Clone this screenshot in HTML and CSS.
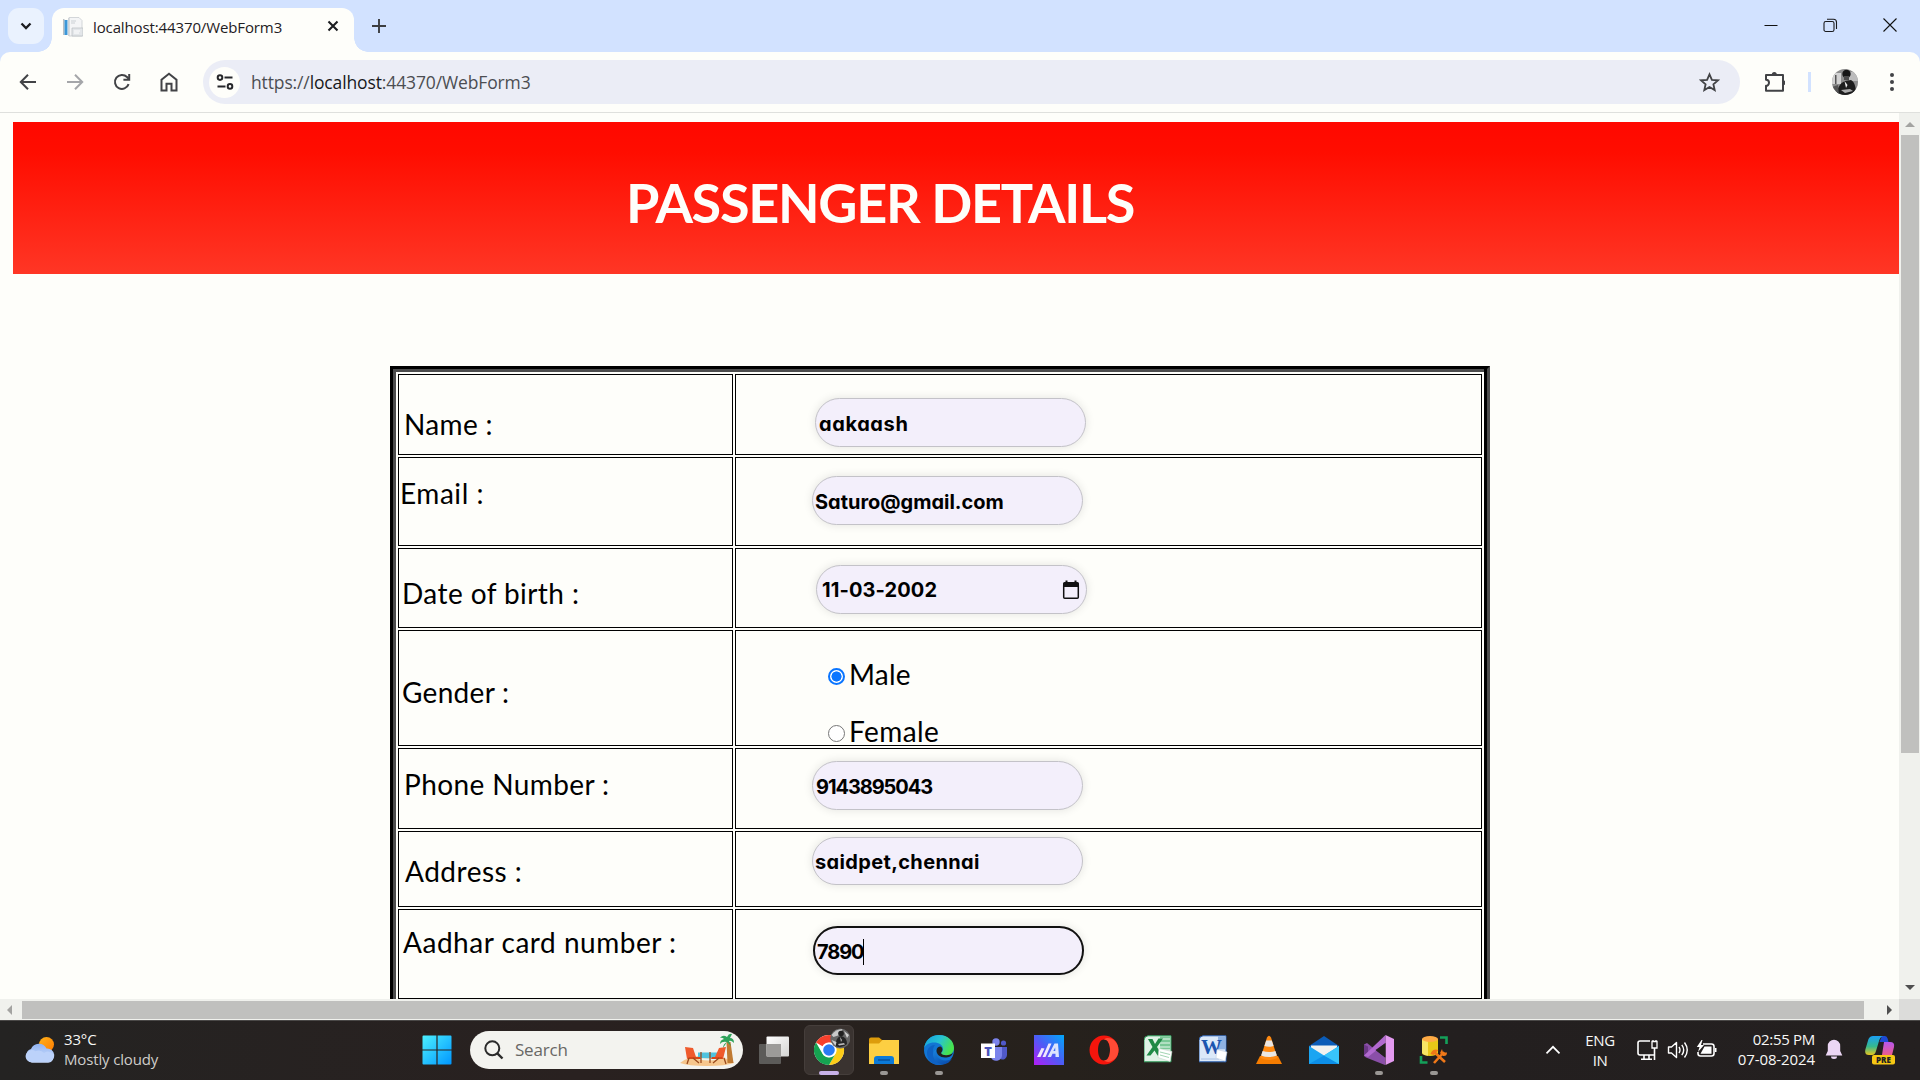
FILE: index.html
```html
<!DOCTYPE html>
<html lang="en">
<head>
<meta charset="utf-8">
<title>localhost:44370/WebForm3</title>
<link rel="stylesheet" href="styles.css">
</head>
<body>
<div class="screen">
  <header class="tabstrip">
    <div class="tab-search"><svg width="18" height="18" viewBox="0 0 18 18"><path d="M4.500 6.500 9 11l4.500-4.500" fill="none" stroke="#1c1d20" stroke-width="2.300"/></svg></div>
    <div class="tab">
      <svg class="favicon" width="20" height="20" viewBox="0 0 20 20"><path d="M6 .5h10l3 3V19H6z" fill="#f4f5f6" stroke="#c9cdd1" stroke-width=".8"/><path d="M0 2h1.500v16H0z" fill="#b9bfc4"/><path d="M1.500 3h3v15h-3z" fill="#3b97d8"/><path d="M5 1h1.500v18H5z" fill="#cfd4d8"/><path d="M8 4h5M8 6h4" stroke="#cbd0d4"/><path d="M9 11h11v8H9z" fill="#e3e6e9" stroke="#b8bdc2" stroke-width=".7"/><path d="M11 14h6M11 16h5" stroke="#fff"/></svg>
      <span class="tab-title">localhost:44370/WebForm3</span>
      <svg class="tab-close" width="12" height="12" viewBox="0 0 12 12"><path d="M1.500 1.500l9 9M10.500 1.500l-9 9" stroke="#1c1d20" stroke-width="2.100"/></svg>
    </div>
    <svg class="newtab" width="14" height="14" viewBox="0 0 14 14"><path d="M7 0v14M0 7h14" stroke="#3c3d40" stroke-width="1.900"/></svg>
    <div class="winctl">
      <svg width="14" height="14" viewBox="0 0 14 14"><path d="M.5 7.500h13" stroke="#111"/></svg>
      <svg width="15" height="15" viewBox="0 0 15 15" fill="none" stroke="#1a1b1e" stroke-width="1.100"><rect x="1" y="3.500" width="10" height="10" rx="1.800"/><path d="M4 1.200h6.500a3 3 0 0 1 3 3V11"/></svg>
      <svg width="14" height="14" viewBox="0 0 14 14"><path d="M.5.5l13 13M13.500.5l-13 13" stroke="#111" stroke-width="1.100"/></svg>
    </div>
  </header>

  <div class="toolbar">
    <div class="nav">
      <svg width="20" height="20" viewBox="0 0 20 20" fill="none" stroke="#424346" stroke-width="2"><path d="M18 10H3M10 2.800 2.800 10l7.200 7.200"/></svg>
      <svg width="20" height="20" viewBox="0 0 20 20" fill="none" stroke="#a5a6a9" stroke-width="2"><path d="M2 10h15M10 2.800l7.200 7.200-7.200 7.200"/></svg>
      <svg width="20" height="20" viewBox="0 0 20 20" fill="none" stroke="#424346" stroke-width="2"><path d="M16.600 12.200A7 7 0 1 1 15 5l2 2.200"/><path d="M17.200 2v5.800h-5.800"/></svg>
      <svg width="20" height="20" viewBox="0 0 20 20" fill="none" stroke="#424346" stroke-width="2"><path d="M2.500 18.500V7.800L10 1.800l7.500 6v10.700h-5v-6.700h-5v6.700z"/></svg>
    </div>
    <div class="omnibox">
      <div class="site-info"><svg width="18" height="18" viewBox="0 0 18 18" fill="none" stroke="#26272a" stroke-width="2"><circle cx="4" cy="4.600" r="2.300"/><path d="M8.500 4.600h8M1.500 13.400h8"/><circle cx="14" cy="13.400" r="2.300"/></svg></div>
      <span class="url">https://<b>localhost</b>:44370/WebForm3</span>
      <svg class="star" width="21" height="21" viewBox="0 0 21 21"><path d="M10.500 2.300l2.400 5.500 6 .5-4.500 4 1.300 5.800-5.200-3.100-5.200 3.100 1.300-5.800-4.500-4 6-.5z" fill="none" stroke="#424346" stroke-width="1.800"/></svg>
    </div>
    <svg class="ext" width="22" height="22" viewBox="0 0 22 22"><path d="M3 4h17v15.800H3v-5a3 3 0 0 0 0-6z" fill="none" stroke="#424346" stroke-width="2" stroke-linejoin="round"/><path d="M8.800 3.500a2.500 2.500 0 0 1 5 0zM20 9.300a2.500 2.500 0 0 1 0 5z" fill="#424346"/></svg>
    <span class="sep"></span>
    <svg class="avatar" width="26" height="26" viewBox="0 0 26 26"><defs><clipPath id="av"><circle cx="13" cy="13" r="13"/></clipPath></defs><g clip-path="url(#av)"><path d="M0 0h26v26H0z" fill="#8d8d8d"/><path d="M0 4h9v11H0z" fill="#d2d2d2"/><path d="M17 3h9v9h-9z" fill="#bcbcbc"/><path d="M3 6h1.500v9H3z" fill="#555"/><circle cx="14.500" cy="5" r="4.200" fill="#151515"/><path d="M12 7h5v4h-5z" fill="#4a4a4a"/><path d="M5 26c0-7 3-12 8-14l6-1c4 2 5 8 5 15z" fill="#1d1d1d"/><path d="M12.500 12l3 4-1.500 3z" fill="#eee"/><path d="M9 21l9-1 3 2-8 2z" fill="#aaa"/><path d="M0 18l6-2 1 10H0z" fill="#555"/></g></svg>
    <svg class="kebab" width="4" height="20" viewBox="0 0 4 20" fill="#424346"><circle cx="2" cy="3" r="2"/><circle cx="2" cy="10" r="2"/><circle cx="2" cy="17" r="2"/></svg>
  </div>

  <div class="view">
    <main class="page">
      <h1 class="banner">PASSENGER DETAILS</h1>
      <div class="form">
        <div class="cell label name"><span>Name :</span></div>
        <div class="cell name-in"><div class="field"><span class="t-name">aakaash</span></div></div>
        <div class="cell label email"><span>Email :</span></div>
        <div class="cell email-in"><div class="field"><span class="t-email">Saturo@gmail.com</span></div></div>
        <div class="cell label dob"><span>Date of birth :</span></div>
        <div class="cell dob-in"><div class="field date"><span class="t-date">11-03-2002</span><svg width="18" height="20" viewBox="0 0 18 20"><path d="M1.700 6h14.600v11.300a1 1 0 0 1-1 1H2.700a1 1 0 0 1-1-1z" fill="none" stroke="#111" stroke-width="1.500"/><path d="M1 3.500A1.500 1.500 0 0 1 2.500 2h13A1.500 1.500 0 0 1 17 3.500V7H1zM3.500.500h2V3h-2zM12.500.500h2V3h-2z" fill="#111"/></svg></div></div>
        <div class="cell label gender"><span>Gender :</span></div>
        <div class="cell gender-in">
          <div class="radio"><i class="dot on"></i><span>Male</span></div>
          <div class="radio"><i class="dot"></i><span class="t-female">Female</span></div>
        </div>
        <div class="cell label phone"><span>Phone Number :</span></div>
        <div class="cell phone-in"><div class="field"><span class="t-num">9143895043</span></div></div>
        <div class="cell label address"><span>Address :</span></div>
        <div class="cell address-in"><div class="field short"><span class="t-addr">saidpet,chennai</span></div></div>
        <div class="cell label aadhar"><span>Aadhar card number :</span></div>
        <div class="cell aadhar-in"><div class="field focus"><span class="t-card">7890</span><i class="caret"></i></div></div>
      </div>
    </main>
    <div class="vbar"><i class="arrow up"></i><span class="vthumb"></span><i class="arrow down"></i></div>
    <div class="hbar"><i class="arrow left"></i><span class="hthumb"></span><i class="arrow right"></i></div>
    <div class="corner"></div>
  </div>

  <footer class="taskbar">
    <div class="weather">
      <svg width="32" height="28" viewBox="0 0 32 28"><defs><linearGradient id="sun" x1="0" y1="0" x2="1" y2="1"><stop offset="0" stop-color="#ffb31a"/><stop offset="1" stop-color="#ff7a00"/></linearGradient><linearGradient id="cl" x1="0" y1="0" x2="0" y2="1"><stop offset="0" stop-color="#8fb2f2"/><stop offset="1" stop-color="#dbe8fd"/></linearGradient></defs><circle cx="22.500" cy="8.500" r="7.500" fill="url(#sun)"/><path d="M8 26.500a7 7 0 0 1-1-13.500 8.500 8.500 0 0 1 15.500-.500A7 7 0 0 1 24 26.500z" fill="url(#cl)"/><path d="M8 26.500a6.200 6.200 0 1 1 3.500-11.200 7 7 0 0 1 8.500 2 5.500 5.500 0 1 1 5 9.200z" fill="#bcd2fa"/></svg>
      <div class="wtext"><span>33°C</span><span class="dim">Mostly cloudy</span></div>
    </div>
    <svg class="start" width="30" height="30" viewBox="0 0 30 30"><defs><linearGradient id="win" x1="0" y1="0" x2="1" y2="1" gradientUnits="objectBoundingBox"><stop offset="0" stop-color="#4cf0ff"/><stop offset="1" stop-color="#0096ff"/></linearGradient></defs><path d="M1.500.5H14.400V14.400H.5V1.500a1 1 0 0 1 1-1zM15.600.5H28.500a1 1 0 0 1 1 1V14.400H15.600zM.5 15.600H14.400V29.500H1.500a1 1 0 0 1-1-1zM15.600 15.600H29.500V28.500a1 1 0 0 1-1 1H15.600z" fill="url(#win)"/></svg>
    <div class="search">
      <svg width="20" height="20" viewBox="0 0 20 20" fill="none" stroke="#2a2a2a" stroke-width="2"><circle cx="8.300" cy="8.300" r="7"/><path d="M13.300 13.300l5.200 5.200" stroke-width="2.400"/></svg>
      <span>Search</span>
      <svg class="beach" width="56" height="34" viewBox="0 0 56 34"><path d="M1 30q8-7 27-8 19 1 27 8-8 3-27 3T1 30z" fill="#f6c68c"/><path d="M19 19.500h20v4.500q-10 3-20 0z" fill="#4fc3de"/><path d="M18 24q10 3 23 0l-2 2.500q-9 2-19 0z" fill="#e9f7f5"/><path d="M47.500 9h4l3 21h-6z" fill="#c07a32"/><path d="M48 9q-5-1-7 2 0-4 4-5-2-2-4-1 3-4 7-1 2-4 5-3-1 2-2 4 4 0 4 5-3-3-5-2l2 5-4-4-4 6q0-4 4-6z" fill="#2fa35a"/><path d="M6 14l8 1 3 9-9 2zM47 14l-7 1-4 9 8 2z" fill="#ef5a2c"/><path d="M10 24h11l1 2H9zM43 24H33l-1 2h12z" fill="#d84718"/><path d="M22 19v11M10 25l-2 6M14 25l6 5M31 19v11M45 25l2 6M40 25l-6 5" fill="none" stroke="#9a4a1c" stroke-width="1.300"/></svg>
    </div>
    <div class="apps">
      <div class="app"><svg width="30" height="30" viewBox="0 0 30 30"><defs><linearGradient id="tv" x1="0" y1="0" x2="1" y2="1"><stop offset="0" stop-color="#fff"/><stop offset="1" stop-color="#d4d4d2"/></linearGradient></defs><rect x="0" y="9" width="22" height="20" rx="1" fill="#5c5b59"/><rect x="7.500" y="1.500" width="22.500" height="20" rx="1" fill="url(#tv)"/><path d="M7.500 9H22v12.500H7.500z" fill="#9c9b99"/></svg></div>
      <div class="app"><div class="active">
        <svg width="36" height="40" viewBox="0 0 36 40"><g transform="translate(15 23)"><circle r="15" fill="#fff"/><path d="M-13-7.500A15 15 0 0 1 13-7.500H0A7.500 7.500 0 0 0-6.500-3.800z" fill="#f6402c"/><path d="M13-7.500A15 15 0 0 1 0 15L6.500 3.800A7.500 7.500 0 0 0 0-7.500z" fill="#fccc18"/><path d="M0 15A15 15 0 0 1-13-7.500L-6.500 3.800A7.500 7.500 0 0 0 6.500 3.800z" fill="#15a351"/><circle r="7.200" fill="#fff"/><circle r="5.800" fill="#2a7bf4"/></g><circle cx="26.300" cy="11.500" r="10" fill="#666"/><path d="M17.500 8q4-6 11-6l-3 6-6 2z" fill="#c9c9c9"/><path d="M21 19q1-9 6-10 6 1 6 8-5 5-12 2z" fill="#262626"/><circle cx="27" cy="6.500" r="2.800" fill="#202020"/><path d="M17.500 13l5 2-1 4zM30 4l5 4-2 3z" fill="#cfcfcf"/><path d="M26 10l2 3-1 2zM24 17l6-1 1 1.500-6 1z" fill="#bbb"/></svg>
      </div><i class="run wide"></i></div>
      <div class="app"><svg width="30" height="30" viewBox="0 0 30 30"><path d="M0 4.500a2 2 0 0 1 2-2h8l3 2.500h15a2 2 0 0 1 2 2V10H0z" fill="#dd9c0b"/><path d="M0 8.500h10L13.500 5H30v24H0z" fill="#fdcf42"/><path d="M5 29v-5a3 3 0 0 1 3-3h14a3 3 0 0 1 3 3v5z" fill="#0b7ad8"/><path d="M9 25h12" stroke="#074b95" stroke-width="1.300"/></svg><i class="run"></i></div>
      <div class="app"><svg width="30" height="30" viewBox="0 0 30 30"><defs><linearGradient id="e1" x1="0" y1="0" x2="1" y2=".4"><stop offset="0" stop-color="#129fe0"/><stop offset=".55" stop-color="#28c3d2"/><stop offset="1" stop-color="#47e34e"/></linearGradient><linearGradient id="e2" x1="0" y1="0" x2=".6" y2="1"><stop offset="0" stop-color="#1a86e0"/><stop offset="1" stop-color="#0a4faf"/></linearGradient></defs><circle cx="15" cy="15" r="15" fill="#1276d4"/><path d="M0 14C1 5 7 0 15 0c9 0 15 6 15 13 0 5-4 7.500-8 7.500-3 0-5-1-5-2 0-1 2-1.500 2-4.500 0-4-4-6.500-9-6.500C5 7.500 1 10 0 14z" fill="url(#e1)"/><path d="M9 15c0 8 5 13 12 13.500a15 15 0 0 1-8 1.400C7 29 3 24 3 18c0-5 4-8 8-8-1 1-2 3-2 5z" fill="#0e62c4"/><path d="M12.500 14.500c-2 5 2 11 9 11 3 0 5-1 6.500-2-2 3.500-5 5.500-8.500 6-6-.5-10.500-5-10.500-10 0-2 1.500-4.500 3.500-5z" fill="url(#e2)"/><path d="M12.500 15.500c0-2.500 2-4 4-4 2.500 1.500 2.500 4 .5 6.500 1 2 4 2.500 7 2 2 0 4-1 5-2.500-1 4-4 5-8 5-5 0-8.500-3-8.500-7z" fill="#23211e"/></svg><i class="run"></i></div>
      <div class="app"><svg width="26" height="24" viewBox="0 0 26 24"><circle cx="15" cy="4" r="3.700" fill="#7b83eb"/><circle cx="22.500" cy="5" r="2.600" fill="#5059c9"/><path d="M18 9h8v8a4.500 4.500 0 0 1-6 4.200z" fill="#5059c9"/><path d="M10 9h11v8.500a5.800 5.800 0 0 1-11 2z" fill="#7b83eb"/><path d="M0 5.500h14V20H0z" fill="#fff"/><text x="7" y="17.500" text-anchor="middle" class="ti" font-size="13" fill="#4b53bc">T</text></svg></div>
      <div class="app"><svg width="30" height="30" viewBox="0 0 30 30"><defs><linearGradient id="ma" x1="0" y1="1" x2="1" y2="0"><stop offset="0" stop-color="#b41cf5"/><stop offset=".5" stop-color="#4d5cf6"/><stop offset="1" stop-color="#00a9fb"/></linearGradient></defs><path d="M0 0h30v30H0z" fill="url(#ma)"/><path d="M3 22L7.500 13l3 .5L6.500 22zM8.500 22L14.500 8.500h3L11.500 22z" fill="#f0e7fc"/><path d="M13.500 22L20.500 8.500h3.500l1 13.500h-3.500v-3.200h-3L17 22zM21.300 16l-.1-3.500-1.800 3.500z" fill="#dce5fd"/></svg></div>
      <div class="app"><svg width="30" height="30" viewBox="0 0 30 30"><path d="M15 .5A14.500 14.500 0 1 0 15 29.500 14.500 14.500 0 1 0 15 .5zM15 4.500c4 0 6 5 6 10.500s-2 10.500-6 10.500S9 20.500 9 15 11 4.500 15 4.500z" fill="#f5150c" fill-rule="evenodd"/><path d="M15 4.500c5-4 14.500 1 14.500 10.500S20 29.500 15 25.500c4 0 6-5 6-10.500S19 4.500 15 4.500z" fill="#ff4a35"/></svg></div>
      <div class="app"><svg width="30" height="30" viewBox="0 0 30 30"><path d="M4 .8h23v26H0V5.500q0-4.200 4-4.700z" fill="#dff2e6" stroke="#2f9e5c"/><path d="M16 1.300h10.500v13H16z" fill="#79c795"/><path d="M15 4h11M15 8h11M15 12h11" stroke="#e9f7ee"/><path d="M4 4h4.500l2.500 5 3.500-5.500H19L13 12l5.500 8.500h-5l-3-5-4 5H2.500l6-8.500z" fill="#1f8a46"/><path d="M15 13.500l13 3-2 10-12-4z" fill="#fff" stroke="#c9d3cc" stroke-width=".6"/><path d="M16 17l10 2.500M16 20l9 2.500" stroke="#8cc9a0" stroke-width=".8"/></svg></div>
      <div class="app"><svg width="30" height="30" viewBox="0 0 30 30"><path d="M4 .8h23v26H0V5.500q0-4.200 4-4.700z" fill="#dce9f9" stroke="#2c62b4"/><path d="M19 1.300h7.500v13H19z" fill="#8fb2e2"/><path d="M2 24h18" stroke="#a9c0e2"/><text x="12.500" y="19" text-anchor="middle" class="wi" font-size="21" fill="#1b55b0">W</text><path d="M18 14.500l10 2.500-2 9-9-3z" fill="#fff" stroke="#c5cfdf" stroke-width=".6"/></svg></div>
      <div class="app"><svg width="28" height="30" viewBox="0 0 28 30"><path d="M5 21h18l4 8H1z" fill="#f57c00"/><path d="M12 2.500q2-3.500 4 0L22.500 23q-8.500 4-17 0z" fill="#ff8a12"/><path d="M11.200 5.500h5.600l1.800 5.500q-4.600 1.500-9.200 0zM7.600 16q6.500 2 12.800 0l1.500 4.500q-8 3-15.800 0z" fill="#e9e6e3"/></svg></div>
      <div class="app"><svg width="30" height="30" viewBox="0 0 30 30"><path d="M0 11L15 1l15 10v4H0z" fill="#0b5cb8"/><path d="M2 10.500h26V18L15 24 2 18z" fill="#f2f2f0"/><path d="M0 11l15 9.500L30 11v18H0z" fill="#1ba5f2"/><path d="M0 29l15-8.500L30 29z" fill="#0d8fe8"/><path d="M30 11v18L15 20.500z" fill="#38c4fb"/></svg></div>
      <div class="app"><svg width="30" height="30" viewBox="0 0 30 30"><path d="M0 9.500l3-1.500 18 14.500V30L2 22.500 0 21z" fill="#8a4fa8"/><path d="M0 9.500l4 2v7l-4 2z" fill="#6b3786"/><path d="M0 20.500L21.500 0v8L4 22z" fill="#b169cf"/><path d="M21.500 0L30 4v22l-8.500 4z" fill="#e39af0"/><path d="M21.500 8v14.500L11.500 15z" fill="#24211f"/></svg><i class="run"></i></div>
      <div class="app"><svg width="30" height="30" viewBox="0 0 30 30"><path d="M3 4v14a8 3 0 0 0 16 0V4z" fill="#e8c718"/><path d="M3 4v14q2 2.500 6 2.800V4z" fill="#f7e565"/><ellipse cx="11" cy="4" rx="8" ry="3" fill="#ffab45"/><path d="M21 2.500h6.500V9M2 21v6.500h6.500" fill="none" stroke="#14a05a" stroke-width="2.600"/><path d="M15 28l10-11M14 16l12 11" stroke="#f07818" stroke-width="2.600"/><path d="M11.500 19q2-6 8-4l-5 5zM23 14l1 3.500 4 0q0 4-4 3.500l-3-3z" fill="#f07818"/></svg><i class="run"></i></div>
    </div>
    <svg class="chev" width="16" height="10" viewBox="0 0 16 10"><path d="M1.500 8.300L8 1.800l6.500 6.500" fill="none" stroke="#fff" stroke-width="1.700"/></svg>
    <div class="lang"><span>ENG</span><span>IN</span></div>
    <svg class="net" width="22" height="22" viewBox="0 0 22 22" fill="none" stroke="#fff" stroke-width="1.600"><path d="M14 2H4a2 2 0 0 0-2 2v10a2 2 0 0 0 2 2h14M8 16v4M13 16v4M5 20.200h11M18.500 9v12"/><path d="M16 2.500h5V9h-5zM17 1v2M20 1v2" stroke-width="1.300"/></svg>
    <svg class="vol" width="22" height="20" viewBox="0 0 22 20" fill="none" stroke="#fff" stroke-width="1.400"><path d="M1.500 7v6h3l5 4.500v-15L4.500 7z" stroke-linejoin="round"/><path d="M12 7q2 3 0 6M14.800 4.800q3.800 5.200 0 10.400M17.500 2.500q5.500 7.500 0 15"/></svg>
    <svg class="bat" width="21" height="20" viewBox="0 0 21 20"><path d="M7 4h8.500A2.500 2.500 0 0 1 18 6.500v7a2.500 2.500 0 0 1-2.500 2.500h-11A2.500 2.500 0 0 1 2 13.500V12" fill="none" stroke="#fff" stroke-width="1.600"/><path d="M8.500 6.500h7v7.200H4.500zM19 8h1.500v4H19z" fill="#fff"/><path d="M5.500 0L.8 7H3.500L2 12 8 5H5L6.500 0z" fill="#fff"/></svg>
    <div class="clock"><span class="time">02:55 PM</span><span>07-08-2024</span></div>
    <svg class="bell" width="18" height="21" viewBox="0 0 18 21"><path d="M9 .8a6.200 6.200 0 0 1 6.200 6.200v5L17.300 16.500H.7L2.800 12V7A6.200 6.200 0 0 1 9 .8z" fill="#ecd6f4"/><path d="M6 17.500h6a3 2.500 0 0 1-6 0z" fill="#ecd6f4"/></svg>
    <svg class="copilot" width="30" height="30" viewBox="0 0 30 30"><defs><linearGradient id="c1" x1="0" y1="0" x2="0" y2="1"><stop offset="0" stop-color="#1ba0f5"/><stop offset=".55" stop-color="#36b98d"/><stop offset="1" stop-color="#e8c51e"/></linearGradient><linearGradient id="c2" x1="0" y1="0" x2="0" y2="1"><stop offset="0" stop-color="#b557ee"/><stop offset="1" stop-color="#ff5d6e"/></linearGradient></defs><path d="M17 1h3q2 0 2.800 3L23.500 7h-9z" fill="#1c49d4"/><path d="M8 1h10q-3 1-4 5l-3 10q-1 4-4 4H4q-5 0-3.500-6L3.500 4Q5 1 8 1z" fill="url(#c1)"/><path d="M19 7h6q5 0 4 5l-2 8q-1 4-5 4h-9q3-1 4-4z" fill="url(#c2)"/><rect x="7" y="20" width="23" height="9.500" rx="2" fill="#f7c714"/><text x="18.500" y="27.600" text-anchor="middle" class="pre" font-size="8" fill="#222">PRE</text></svg>
  </footer>
</div>
</body>
</html>
```
FILE: styles.css
```css
* { box-sizing: border-box; }
body { margin: 0; background: #fefefa; font-family: "Open Sans", sans-serif; }
svg { display: block; flex: none; }
.screen { width: 1920px; height: 1080px; display: flex; flex-direction: column; overflow: hidden; }

/* browser tab strip */
.tabstrip { position: relative; z-index: 1; height: 52px; flex: none; display: flex; background: #d2e2ff; padding: 8px 0 0 8px; }
.tab-search { width: 36px; height: 36px; border-radius: 11px; background: #eaf2fe; display: grid; place-items: center; margin-right: 8px; }
.tab { position: relative; width: 302px; height: 44px; background: #fefefa; border-radius: 12px 12px 0 0; display: flex; align-items: center; padding: 0 15px 7px 11px; }
.tab::before, .tab::after { content: ""; position: absolute; bottom: 0; width: 14px; height: 14px; }
.tab::before { left: -14px; background: radial-gradient(circle at 0 0, transparent 13.5px, #fefefa 14px); }
.tab::after { right: -14px; background: radial-gradient(circle at 100% 0, transparent 13.5px, #fefefa 14px); }
.tab-title { margin-left: 10px; margin-top: 1px; font-size: 15px; letter-spacing: -.12px; color: #1f2023; }
.tab-close { margin: -2px 0 0 auto; }
.newtab { margin: 11px 0 0 18px; }
.winctl { margin-left: auto; display: flex; gap: 45px; padding: 10px 23px 0 0; }

/* toolbar */
.toolbar { height: 60px; flex: none; display: flex; align-items: center; background: #fefefa; border-radius: 10px 10px 0 0; box-shadow: 0 -10px 0 #d2e2ff; }
.nav { display: flex; gap: 27px; padding-left: 18px; width: 203px; }
.omnibox { width: 1537px; height: 44px; border-radius: 22px; background: #ebedf6; display: flex; align-items: center; padding: 0 20px 0 6px; }
.site-info { width: 31px; height: 31px; border-radius: 50%; background: #fefefa; display: grid; place-items: center; }
.url { margin-left: 11px; font-size: 17.5px; letter-spacing: -.13px; color: #4b4d52; }
.url b { font-weight: 400; color: #17181b; }
.star { margin-left: auto; }
.ext { margin-left: 23px; }
.sep { width: 3px; height: 20px; background: #d2e2ff; margin-left: 23px; }
.avatar { margin-left: 21px; }
.kebab { margin-left: 32px; }

/* viewport with scrollbars */
.view { height: 908px; flex: none; display: grid; grid-template: 886px 21px / 1899px 21px; border-top: 1px solid #dfe0dd; }
.page { overflow: hidden; padding: 9px 0 0 13px; }
.banner { margin: 0; height: 152px; padding: 51px 0 0 613px; background: linear-gradient(#ff0800, #ff0d00 20%, #ff3625); color: #fefefa; font: 700 54px/60px Lato, sans-serif; letter-spacing: -1.3px; white-space: nowrap; }
.vbar { background: #f0f1ed; display: flex; flex-direction: column; align-items: center; padding: 9px 0; }
.vthumb { width: 18px; height: 618px; background: #c0c0be; margin: 8px 0 auto; }
.hbar { background: #f0f1ed; display: flex; align-items: center; padding: 0 7px; }
.hthumb { width: 1842px; height: 18px; background: #c0c0be; margin: 0 auto 0 10px; }
.arrow { width: 0; height: 0; border: 5px solid transparent; }
.up { border-top: 0; border-bottom-color: #a3a3a1; }
.down { border-bottom: 0; border-top-color: #4f4f4f; }
.left { border-left: 0; border-right-color: #a3a3a1; }
.right { border-right: 0; border-left-color: #4f4f4f; }
.corner { background: #dcdcda; }

/* form table with a grooved frame */
.form { position: relative; width: 1100px; height: 720px; margin: 92px 0 0 377px; border: 3px solid #000; border-right-color: #4c4c4c; box-shadow: inset 3px 3px 0 #4c4c4c; padding: 5px; display: grid; grid-template-columns: 335px 747px; grid-template-rows: 81px 89px 80px 116px 81px 76px 90px; gap: 2px; }
.form::after { content: ""; position: absolute; top: 0; bottom: 0; right: 0; width: 3px; background: #000; }
.cell { border: 1px solid #000; font: 28px/34px Lato, sans-serif; color: #000; white-space: nowrap; min-width: 0; min-height: 0; }
.name { padding: 32px 0 0 5px; letter-spacing: .35px; }
.email { padding: 18px 0 0 1px; letter-spacing: .55px; }
.dob { padding: 27px 0 0 3px; letter-spacing: .42px; }
.gender { padding: 44px 0 0 3px; letter-spacing: .3px; }
.phone { padding: 18px 0 0 5px; letter-spacing: .4px; }
.address { padding: 22px 0 0 6px; letter-spacing: .5px; }
.aadhar { padding: 15px 0 0 4px; letter-spacing: .52px; }
.name-in { padding: 23px 0 0 79px; }
.email-in { padding: 18px 0 0 76px; }
.dob-in { padding: 16px 0 0 80px; }
.phone-in { padding: 12px 0 0 76px; }
.address-in { padding: 5px 0 0 76px; }
.aadhar-in { padding: 16px 0 0 77px; }
.gender-in { padding: 26px 0 0 92px; display: flex; flex-direction: column; gap: 23px; }
.field { width: 271px; height: 49px; border: 1px solid #c3c2c8; border-radius: 25px; background: #f3effb; box-shadow: 0 0 10px rgba(0, 0, 0, .11); display: flex; align-items: center; padding: 3px 6px 0 2px; font: 700 20px/24px Inter, sans-serif; font-feature-settings: "cv11"; }
.short { height: 48px; padding-top: 1px; }
.date { padding: 0 6px 0 5px; justify-content: space-between; }
.focus { border: 2px solid #111; padding: 3px 0 0 2px; }
.t-name { margin-left: 1px; letter-spacing: .6px; }
.t-email { letter-spacing: -.02px; }
.t-date { letter-spacing: .1px; }
.t-num { margin-left: 1px; letter-spacing: -1.08px; }
.t-addr { letter-spacing: .36px; }
.t-card { letter-spacing: -1.1px; }
.caret { width: 1px; height: 26px; background: #000; }
.radio { display: flex; align-items: center; gap: 4px; height: 34px; letter-spacing: .2px; }
.t-female { letter-spacing: .4px; }
.dot { width: 17px; height: 17px; border: 1.5px solid #767676; border-radius: 50%; background: #fff; margin-top: 4px; }
.on { border: 2px solid #0a75ff; background: radial-gradient(circle, #0a75ff 4.8px, #fff 5.3px); }

/* taskbar */
.taskbar { height: 60px; flex: none; display: flex; align-items: center; padding-bottom: 2px; background: linear-gradient(90deg, #242322, #292120 30%, #26211c 55%, #231f1f 75%, #242020); border-top: 1px solid #4a4847; color: #f7f7f5; font-size: 15px; line-height: 20px; }
.weather { display: flex; align-items: center; width: 422px; padding-left: 24px; gap: 8px; }
.wtext, .lang, .clock { display: flex; flex-direction: column; white-space: nowrap; }
.wtext, .clock { margin-top: -2px; }
.wtext { letter-spacing: -.15px; }
.dim { color: #cfcdca; }
.search { width: 273px; height: 38px; margin-left: 18px; border-radius: 19px; background: #f3f3ef; display: flex; align-items: center; padding: 0 8px 0 14px; font-size: 17px; letter-spacing: -.2px; color: #686765; }
.search span { margin-left: 11px; }
.beach { margin-left: auto; }
.apps { display: flex; margin-left: 3px; }
.app { position: relative; width: 55px; height: 57px; display: grid; place-items: center; }
.active { width: 50px; height: 50px; border-radius: 6px; background: #3a3330; border: 1px solid #453e3b; display: flex; align-items: flex-start; padding: 1px 0 0 9px; }
.run { position: absolute; bottom: 3px; left: 50%; width: 8px; height: 4px; margin-left: -4px; border-radius: 2px; background: #9a9794; }
.wide { width: 20px; margin-left: -10px; background: #c8b1e8; }
.ti, .pre { font-family: "Open Sans", sans-serif; font-weight: 800; }
.wi { font-family: "Liberation Serif", serif; font-weight: 700; }
.chev { margin-left: 84px; }
.lang { width: 40px; margin-left: 19px; text-align: center; letter-spacing: -.4px; }
.net { margin-left: 16px; }
.vol { margin-left: 9px; }
.bat { margin-left: 7px; }
.clock { width: 98px; text-align: right; letter-spacing: -.1px; }
.time { letter-spacing: -.3px; }
.bell { margin-left: 10px; }
.copilot { margin-left: 22px; }
```
